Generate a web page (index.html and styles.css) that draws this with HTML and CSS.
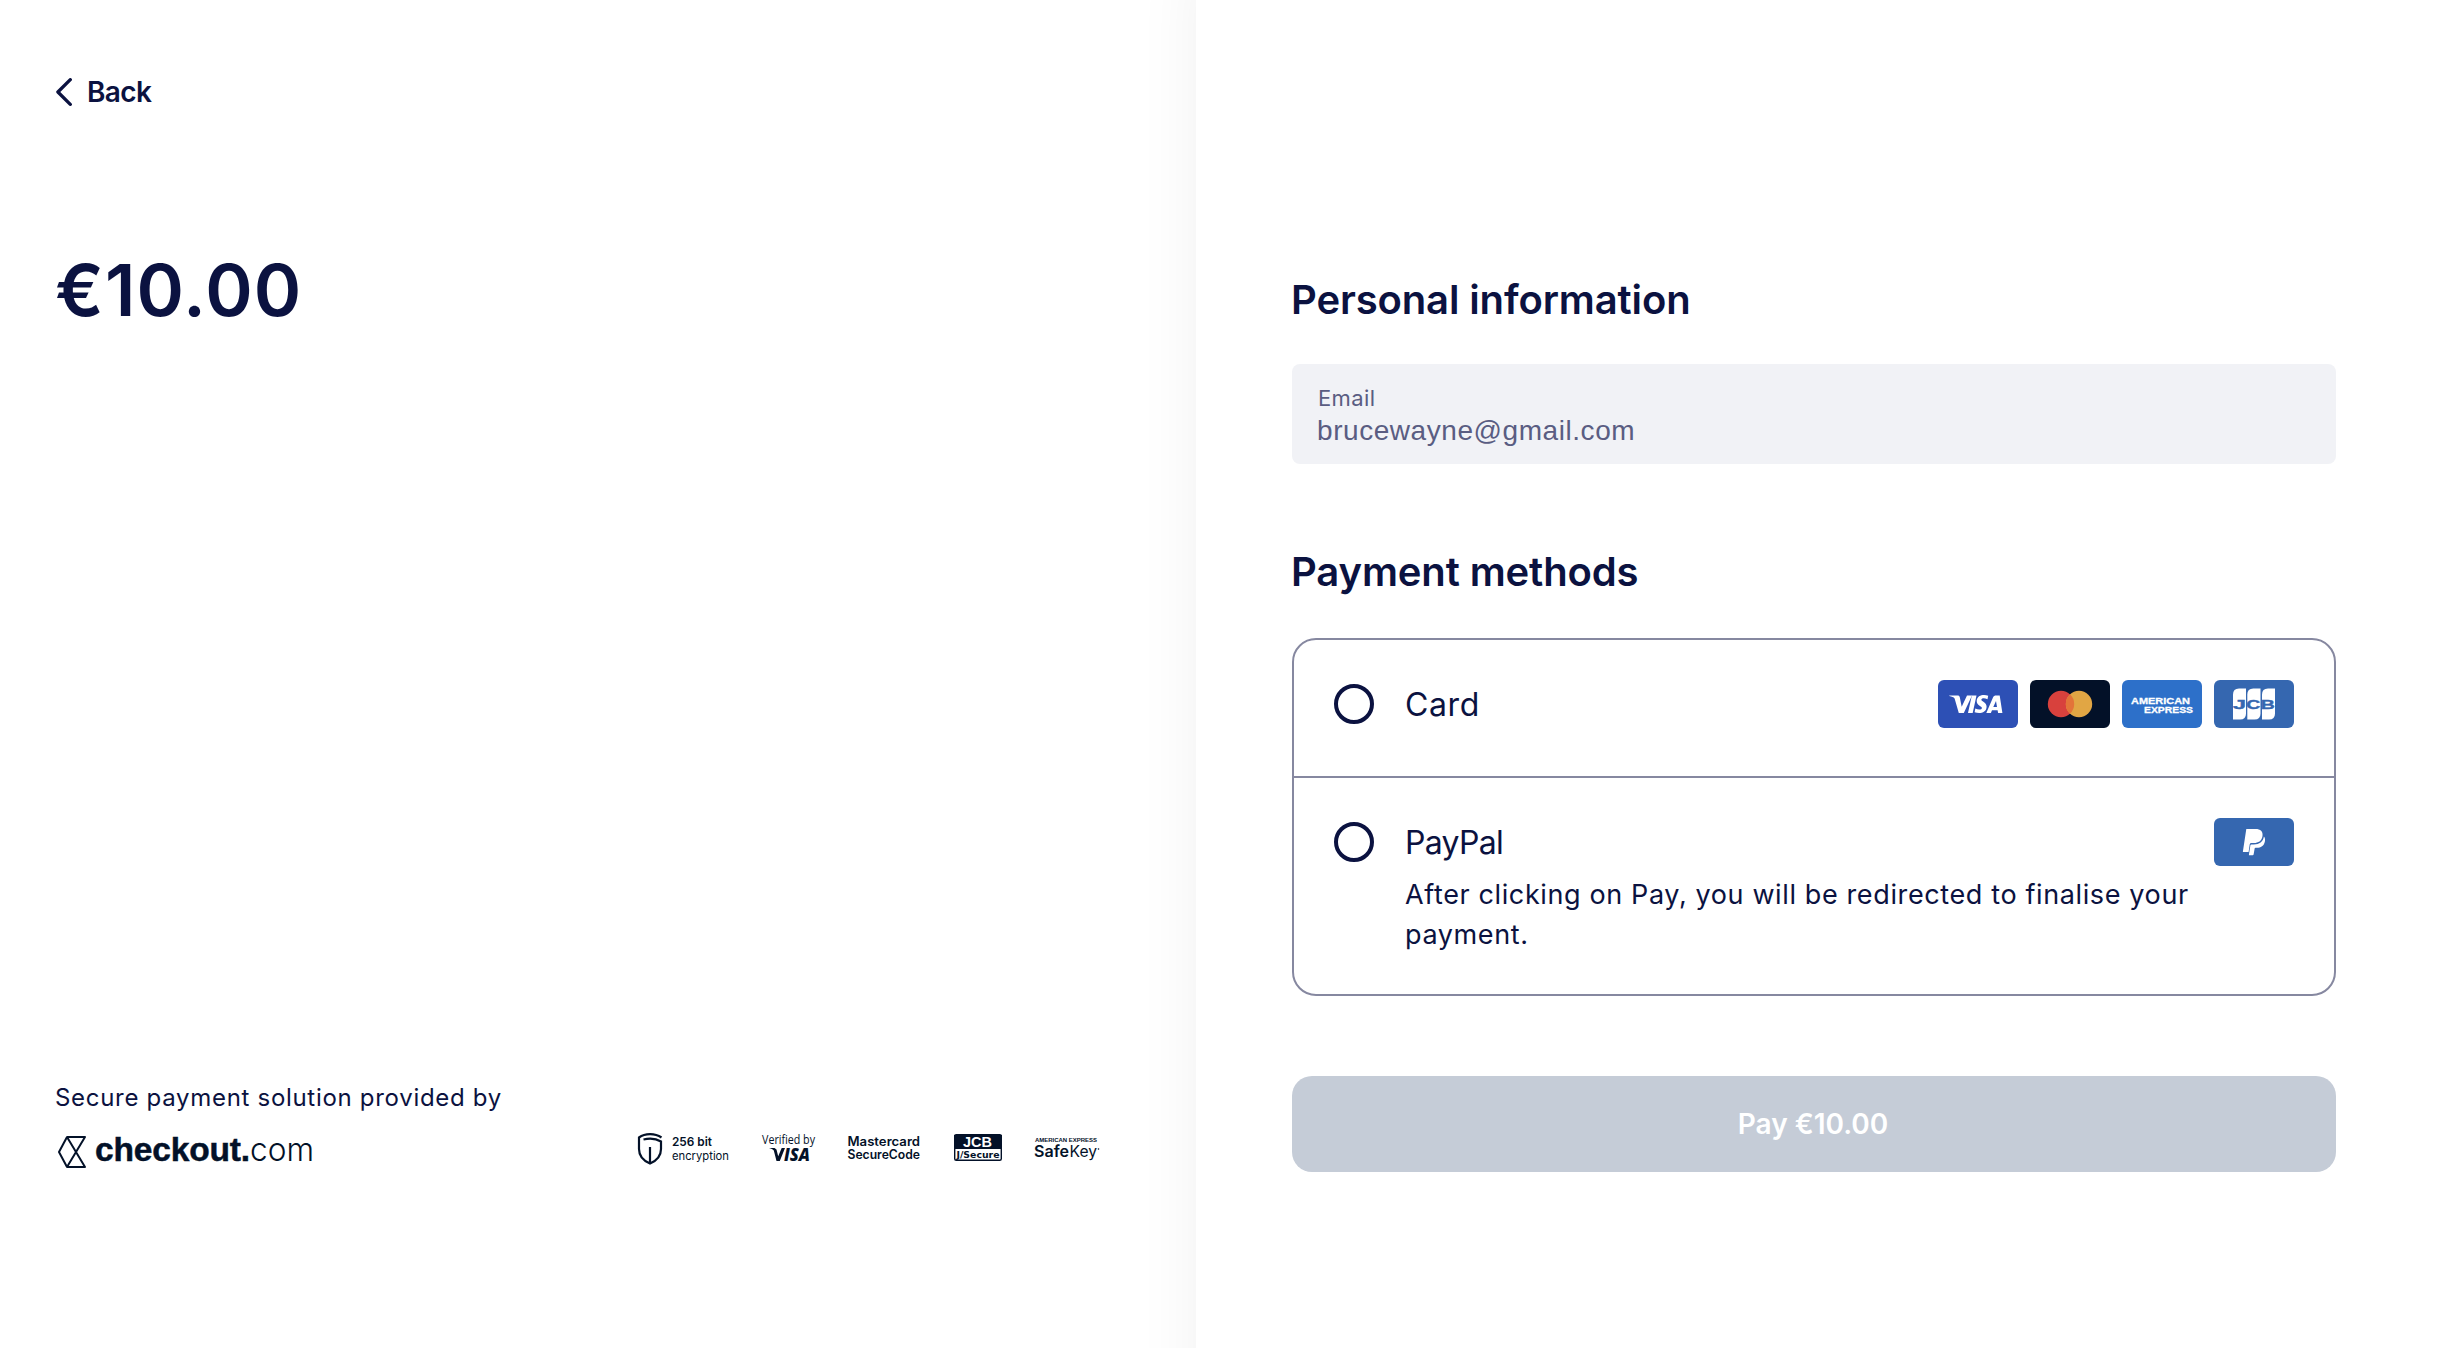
FILE: index.html
```html
<!DOCTYPE html>
<html lang="en">
<head>
<meta charset="utf-8">
<title>Payment</title>
<link rel="stylesheet" href="styles.css">
</head>
<body>
<main class="page">
  <section class="summary">
    <a class="back">
      <svg class="back-icon" width="16" height="28" viewBox="0 0 16 28"><path d="M14.300 1.700 1.900 14l12.400 12.300" fill="none" stroke="#0b1240" stroke-width="3.300" stroke-linecap="round" stroke-linejoin="round"/></svg>
      <span class="back-label">Back</span>
    </a>
    <div class="amount">€10.00</div>
    <footer class="secure">
      <div class="secure-text">Secure payment solution provided by</div>
      <div class="logos">
        <svg class="checkout-logo" width="270" height="40" viewBox="0 0 270 40" fill="#031128">
          <path d="M11 7H29L11 37H29L11 7L3 22L11 37" fill="none" stroke="#031128" stroke-width="2" stroke-linejoin="round"/>
          <text x="39" y="30.500" font-family="Liberation Sans, sans-serif" font-weight="700" font-size="33.500" textLength="155" stroke="#031128" stroke-width=".5">checkout.</text>
          <text x="194" y="30.500" font-family="Inter, sans-serif" font-weight="300" font-size="33" textLength="64" lengthAdjust="spacingAndGlyphs">com</text>
        </svg>
        <svg class="badges" width="464" height="40" viewBox="636 1130 464 40" fill="#031128">
          <g fill="none" stroke="#031128" stroke-width="2.200">
            <path d="M661.500 1137.500 C655 1133 645 1133 639 1137.500 V1149 C639 1157 644 1161 650 1163.500 C656 1161 661 1157 661 1149 V1141.500 C655 1138 650 1138 643.500 1139.500"/>
            <path d="M650 1147V1163"/>
          </g>
          <text x="672" y="1146" font-family="Inter, sans-serif" font-weight="600" font-size="12" textLength="40" lengthAdjust="spacingAndGlyphs">256 bit</text>
          <text x="672" y="1160" font-family="Inter, sans-serif" font-size="11.500" textLength="57" lengthAdjust="spacingAndGlyphs">encryption</text>
          <text x="762" y="1144" font-family="Open Sans, sans-serif" font-size="12.500" textLength="53" lengthAdjust="spacingAndGlyphs">Verified by</text>
          <path d="M769 1148h5.500l2 1.500 1.700 6.700 3.500-8.200h3.300l-5.200 12.900h-3.300l-2.700-10.400c-.8-1.300-2.500-2-4.800-2.500z"/>
          <text x="784" y="1160.900" font-family="Open Sans, sans-serif" font-weight="800" font-style="italic" font-size="18" textLength="26" lengthAdjust="spacingAndGlyphs">ISA</text>
          <text x="847.500" y="1146" font-family="Inter, sans-serif" font-weight="600" font-size="12.500" textLength="72.500" lengthAdjust="spacingAndGlyphs">Mastercard</text>
          <text x="847.500" y="1159" font-family="Inter, sans-serif" font-weight="600" font-size="12.500" textLength="72.500" lengthAdjust="spacingAndGlyphs">SecureCode</text>
          <rect x="954.700" y="1134.700" width="46.600" height="25.600" rx="1.500" fill="#fff" stroke="#031128" stroke-width="1.400"/>
          <path d="M954 1135h48v14h-48z"/>
          <text x="963" y="1146.800" fill="#fff" font-family="Liberation Sans, sans-serif" font-weight="700" font-size="15" textLength="29" lengthAdjust="spacingAndGlyphs">JCB</text>
          <text x="956.500" y="1157.800" font-family="DejaVu Sans, sans-serif" font-weight="700" font-size="9.500" textLength="43" lengthAdjust="spacingAndGlyphs">J/Secure</text>
          <text x="1035" y="1141.800" font-family="Liberation Sans, sans-serif" font-weight="700" font-size="4.500" textLength="62" lengthAdjust="spacingAndGlyphs">AMERICAN EXPRESS</text>
          <text x="1034" y="1156.500" font-family="Inter, sans-serif" font-weight="600" font-size="15.500" textLength="35" lengthAdjust="spacingAndGlyphs">Safe</text>
          <text x="1069.500" y="1156.500" font-family="Inter, sans-serif" font-size="15.500" textLength="27.500" lengthAdjust="spacingAndGlyphs">Key</text>
          <circle cx="1098.500" cy="1149" r=".8"/>
        </svg>
      </div>
    </footer>
  </section>

  <section class="checkout">
    <h2 class="heading">Personal information</h2>
    <div class="field">
      <label class="field-label">Email</label>
      <div class="field-value">brucewayne@gmail.com</div>
    </div>
    <h2 class="heading methods-title">Payment methods</h2>
    <div class="methods">
      <div class="method method-card">
        <i class="radio"></i>
        <div class="method-body"><div class="method-name">Card</div></div>
        <div class="brands">
          <svg class="brand" viewBox="0 0 80 48"><rect width="80" height="48" rx="6" fill="#2d50b5"/>
            <path d="M11.300 15.500h8.200c1.300 0 2 .5 2.300 1.700l1.900 9.500 5.300-11.200h5l-8.200 17.400h-5L16.600 18.500c-.9-1.200-2.800-1.900-5.300-2.400z" fill="#fff"/>
            <path d="M33.800 15.500h4.700L34.700 32.900H30z" fill="#fff"/>
            <path d="M50.200 15.700 49.500 19.300C46 17.700 43.400 18.300 43.400 19.800 43.400 21.600 48.700 22.200 48.600 26.800 48.500 33.200 41.300 34 36.600 32.300L37.300 28.500C40.500 30.100 43.800 29.800 43.900 27.900 44 26 38.600 25.500 38.700 20.900 38.900 15 45.800 14.200 50.200 15.700Z" fill="#fff"/>
            <path fill-rule="evenodd" d="M58.200 15.500h3.500l2.700 17.400h-4.300l-.5-2.700h-5.600l-1.100 2.700h-4.600l6.800-15.700c.5-1.200 1.400-1.700 3.100-1.700zM55.300 26.900h3.700l-1-5.900z" fill="#fff"/></svg>
          <svg class="brand" viewBox="0 0 80 48"><rect width="80" height="48" rx="6" fill="#031128"/><circle cx="31" cy="24" r="13.200" fill="#d8413d"/><circle cx="49" cy="24" r="13.200" fill="#e1a644"/><path d="M40 14.350a13.200 13.200 0 0 1 0 19.300a13.200 13.200 0 0 1 0-19.300z" fill="#e37439"/></svg>
          <svg class="brand" viewBox="0 0 80 48" fill="#fff" font-family="Liberation Sans, sans-serif" font-weight="700" font-size="9.500"><rect width="80" height="48" rx="6" fill="#2d70c9"/><g stroke="#fff" stroke-width=".3"><text x="9" y="24" textLength="59" lengthAdjust="spacingAndGlyphs">AMERICAN</text><text x="22" y="32.800" textLength="49" lengthAdjust="spacingAndGlyphs">EXPRESS</text></g></svg>
          <svg class="brand" viewBox="0 0 80 48"><rect width="80" height="48" rx="6" fill="#3567b0"/><g fill="#fff"><path d="M19 14.500q0-6 6-6h7v25q0 6-6 6h-7z"/><path d="M33.300 14.500q0-6 6-6h7.200v25q0 6-6 6h-7.200z"/><path d="M48 14.500q0-6 6-6h7v25q0 6-6 6h-7z"/></g>
            <g fill="#3567b0" stroke="#3567b0" stroke-width=".4" font-family="Liberation Sans, sans-serif" font-weight="700" font-size="13.500"><text x="19" y="28.600" textLength="13" lengthAdjust="spacingAndGlyphs">J</text><text x="32.300" y="28.600" textLength="14" lengthAdjust="spacingAndGlyphs">C</text><text x="46.800" y="28.600" textLength="14" lengthAdjust="spacingAndGlyphs">B</text></g></svg>
        </div>
      </div>
      <div class="method">
        <i class="radio"></i>
        <div class="method-body">
          <div class="method-name method-name-paypal">PayPal</div>
          <p class="method-note">After clicking on Pay, you will be redirected to finalise your<br>payment.</p>
        </div>
        <div class="brands">
          <svg class="brand" viewBox="0 0 80 48"><rect width="80" height="48" rx="6" fill="#3567b0"/><g fill="#fff"><path d="M32.300 11h9.200c5 0 7.700 2.500 7 7-.7 5-4.300 7-8.500 7h-2.600c-1 0-1.500.6-1.700 1.600l-1.100 7.500h-5.200c-.4 0-.6-.3-.5-.7z"/><path d="M49.900 18.500c1.200 1.400 1.400 3.100 1 5-1 4.500-4 6.300-8 6.300h-1.300c-.6 0-.9.300-1 .9l-1 5.800c-.1.500-.5.800-1 .8h-3.300c-.3 0-.5-.2-.4-.6l1.500-9.400c.1-.6.4-.9 1-.9h2.500c5.500 0 9.200-2.700 10-7.900z"/></g></svg>
        </div>
      </div>
    </div>
    <button class="pay">Pay €10.00</button>
  </section>
</main>
</body>
</html>
```
FILE: styles.css
```css
* { box-sizing: border-box; }

body {
  margin: 0;
  background: #fff;
  color: #0b1240;
  font-family: Inter, sans-serif;
}

.page {
  display: flex;
  width: 2446px;
  height: 1348px;
  overflow: hidden;
}

.summary {
  display: flex;
  flex-direction: column;
  width: 1196px;
  padding: 76px 96px 178px 55px;
}

.back {
  display: flex;
  align-items: center;
  gap: 15px;
  height: 32px;
  padding-left: 1px;
}

.back-label {
  padding-top: 1px;
  font-size: 28px;
  line-height: 31px;
  font-weight: 600;
  letter-spacing: -0.6px;
}

.amount {
  margin-top: 138px;
  font-size: 72px;
  line-height: 88px;
  font-weight: 600;
  letter-spacing: 1.1px;
}

.secure { margin-top: auto; }

.secure-text {
  font-size: 24px;
  line-height: 32px;
  letter-spacing: 0.7px;
}

.logos {
  display: flex;
  justify-content: space-between;
  margin-top: 16px;
  padding-left: 1px;
}

.checkout {
  width: 1250px;
  margin: -40px 0 -80px;
  padding: 316px 110px 0 96px;
  background: #fff;
  box-shadow: 0 0 60px rgba(5, 30, 25, 0.06);
}

.heading {
  margin: 0 0 0 -1px;
  font-size: 40px;
  line-height: 48px;
  font-weight: 600;
  letter-spacing: -0.12px;
}

.field {
  height: 100px;
  margin-top: 40px;
  padding: 20px 26px;
  border-radius: 8px;
  background: #f1f2f6;
  color: #5a5d82;
}

.field-label {
  display: block;
  font-size: 22px;
  line-height: 28px;
  letter-spacing: 0.4px;
}

.field-value {
  margin: 3px 0 0 -1px;
  font-family: "Liberation Sans", sans-serif;
  font-size: 28px;
  line-height: 32px;
  letter-spacing: 0.56px;
}

.methods-title { margin-top: 84px; }

.methods {
  margin-top: 42px;
  border: 2px solid #8688a0;
  border-radius: 24px;
}

.method {
  display: flex;
  align-items: flex-start;
  padding: 40px;
}

.method-card {
  height: 138px;
  border-bottom: 2px solid #8688a0;
}

.radio {
  width: 40px;
  height: 40px;
  margin-top: 4px;
  border: 4px solid #0b1240;
  border-radius: 50%;
}

.method-body {
  flex: 1;
  margin-left: 31px;
  padding-top: 1px;
}

.method-name {
  font-size: 32px;
  line-height: 48px;
  letter-spacing: 0.6px;
}

.method-name-paypal { letter-spacing: -0.7px; }

.method-note {
  margin: 8px -40px -1px 0;
  font-size: 27px;
  line-height: 40px;
  letter-spacing: 0.62px;
  white-space: nowrap;
}

.brands {
  display: flex;
  gap: 12px;
}

.brand {
  width: 80px;
  height: 48px;
}

.pay {
  display: block;
  width: 100%;
  height: 96px;
  margin-top: 80px;
  padding: 0 2px 0 0;
  border: 0;
  border-radius: 20px;
  background: #c5ccd7;
  color: #fff;
  font-family: Inter, sans-serif;
  font-size: 28px;
  line-height: 32px;
  font-weight: 600;
}
```
